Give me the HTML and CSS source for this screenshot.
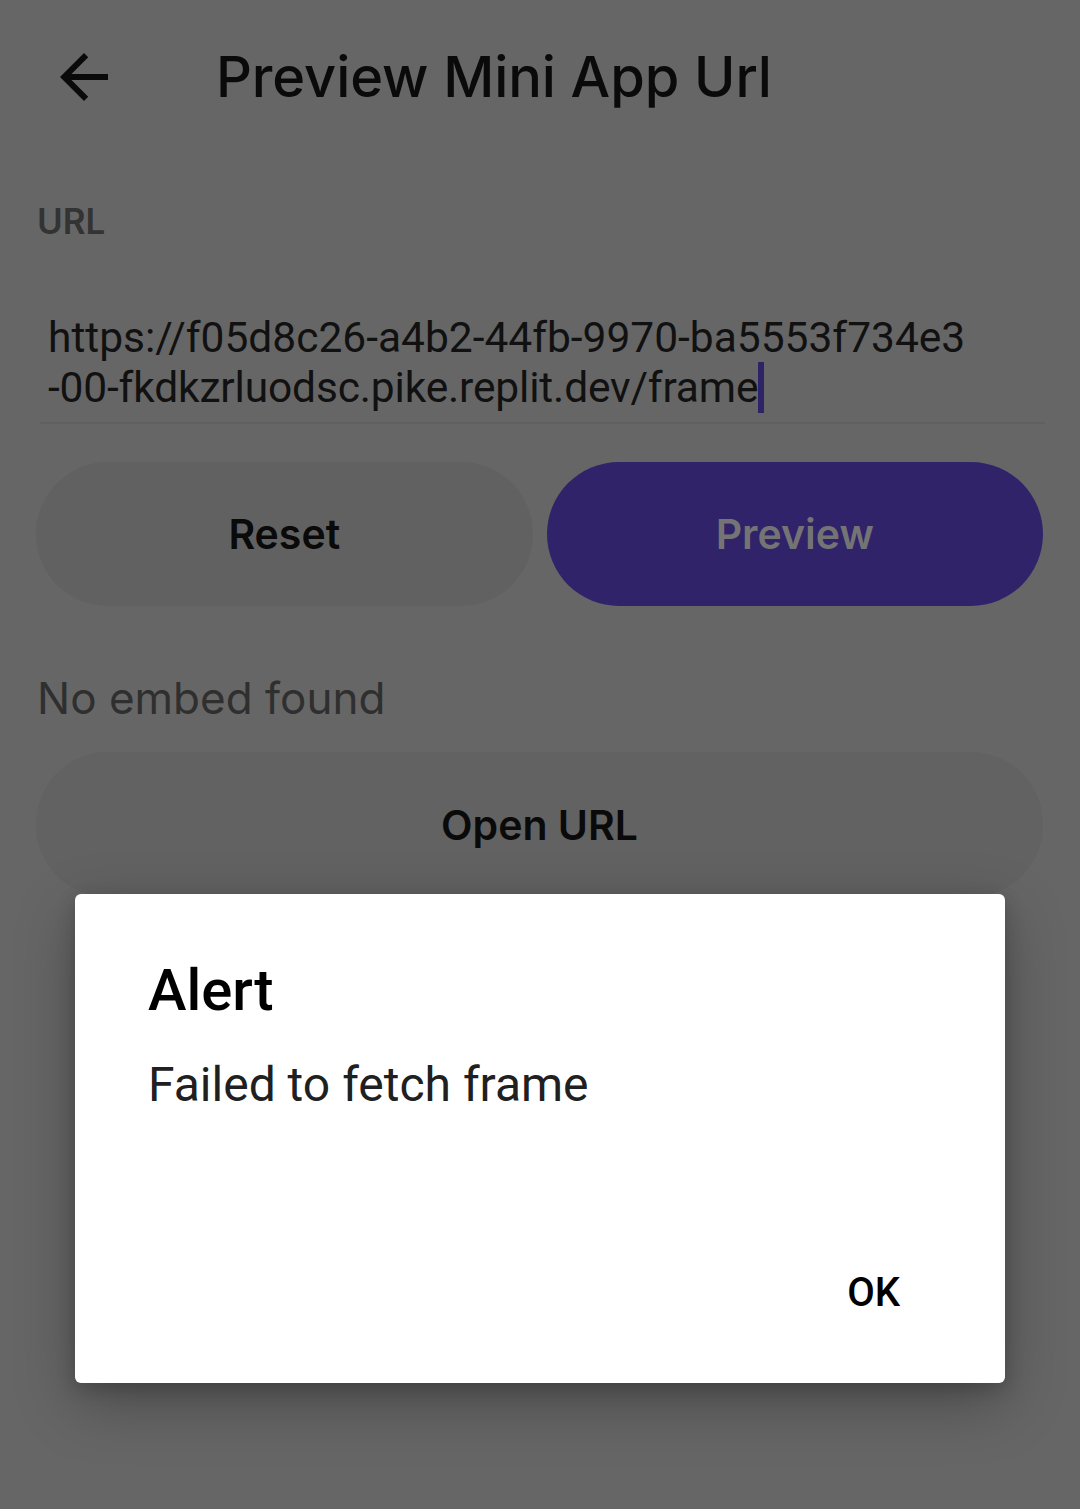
FILE: index.html
```html
<!DOCTYPE html>
<html lang="en">
<head>
<meta charset="utf-8">
<title>Preview Mini App Url</title>
<link rel="stylesheet" href="styles.css">
</head>
<body>
<div class="screen">
  <header class="topbar">
    <svg class="back" viewBox="0 0 24 24" aria-hidden="true"><path d="M20 11H7.83l5.59-5.59L12 4l-8 8 8 8 1.41-1.41L7.83 13H20v-2z"/></svg>
    <h1 class="title">Preview Mini App Url</h1>
  </header>

  <main class="content">
    <div class="label">URL</div>
    <div class="field">
      <div class="field-text">
        <span class="line">https://f05d8c26-a4b2-44fb-9970-ba5553f734e3</span>
        <span class="line line-tight">-00-fkdkzrluodsc.pike.replit.dev/frame<span class="caret"></span></span>
      </div>
    </div>

    <div class="actions">
      <button class="btn btn-secondary">Reset</button>
      <button class="btn btn-primary">Preview</button>
    </div>

    <p class="status">No embed found</p>

    <button class="btn btn-secondary btn-wide">Open URL</button>
  </main>

  <div class="dialog" role="alertdialog">
    <h2 class="dialog-title">Alert</h2>
    <p class="dialog-message">Failed to fetch frame</p>
    <div class="dialog-actions">
      <button class="dialog-btn">OK</button>
    </div>
  </div>
</div>
</body>
</html>
```

FILE: styles.css
```css
* { box-sizing: border-box; }
html, body { margin: 0; padding: 0; }
body {
  background: #666666;
  width: 1080px;
  height: 1509px;
  overflow: hidden;
  font-family: "Inter", "Roboto", sans-serif;
}
.screen {
  position: relative;
  width: 1080px;
  height: 1509px;
}
.topbar {
  display: flex;
  align-items: center;
  height: 154px;
  padding-left: 48px;
}
.back {
  width: 72px;
  height: 72px;
  fill: #0a0a0a;
  flex: none;
}
.title {
  margin: 0 0 0 96px;
  font-family: "Inter", sans-serif;
  font-weight: 500;
  font-size: 56px;
  line-height: 70px;
  color: #0a0a0a;
  letter-spacing: -0.1px;
}
.content {
  padding: 0 37px 0 36px;
}
.label {
  margin-top: 46px;
  font-family: "Inter", sans-serif;
  font-weight: 600;
  font-size: 35px;
  line-height: 42px;
  color: #333333;
  padding-left: 1px;
}
.field {
  margin-top: 72px;
  padding: 0 0 9px 12px;
  border-bottom: 2px solid #606060;
  margin-left: 4px;
  margin-right: -2px;
}
.field-text {
  font-family: "Roboto", sans-serif;
  font-size: 42.5px;
  line-height: 48px;
  color: #111111;
}
.line { display: block; white-space: nowrap; margin-left: -4px; }
.line-tight { letter-spacing: -0.16px; }
.caret {
  display: inline-block;
  width: 6px;
  height: 51px;
  background: #2e2366;
  vertical-align: -11px;
}
.actions {
  display: flex;
  gap: 14px;
  margin-top: 38px;
}
.btn {
  border: none;
  border-radius: 72px;
  height: 144px;
  font-family: "Inter", sans-serif;
  font-weight: 600;
  font-size: 41px;
  cursor: pointer;
  padding: 0;
}
.actions .btn { flex: 1; }
.btn-secondary {
  background: #616161;
  color: #0a0a0a;
}
.btn-primary {
  background: #31236a;
  color: #747474;
}
.status {
  margin: 66px 0 0 1px;
  font-family: "Inter", sans-serif;
  font-weight: 400;
  font-size: 44px;
  line-height: 52px;
  color: #2f2f2f;
}
.btn-wide {
  display: block;
  width: 100%;
  height: 145px;
  margin-top: 28px;
  background: #626262;
}
.dialog {
  position: absolute;
  left: 75px;
  top: 894px;
  width: 930px;
  height: 489px;
  background: #ffffff;
  border-radius: 6px;
  box-shadow: 0 20px 60px rgba(0, 0, 0, 0.28), 0 6px 18px rgba(0, 0, 0, 0.18);
  padding: 0 73px;
  display: flex;
  flex-direction: column;
  font-family: "Roboto", sans-serif;
}
.dialog-title {
  margin: 62px 0 0;
  font-weight: 500;
  font-size: 58px;
  line-height: 68px;
  color: #000000;
}
.dialog-message {
  margin: 33px 0 0;
  font-size: 48px;
  line-height: 56px;
  color: #202020;
}
.dialog-actions {
  margin-top: auto;
  display: flex;
  justify-content: flex-end;
  padding-bottom: 58px;
  margin-right: 2px;
}
.dialog-btn {
  border: none;
  background: transparent;
  font-family: "Roboto", sans-serif;
  font-weight: 500;
  font-size: 40px;
  color: #000000;
  padding: 8px 30px;
  line-height: 48px;
}
```
